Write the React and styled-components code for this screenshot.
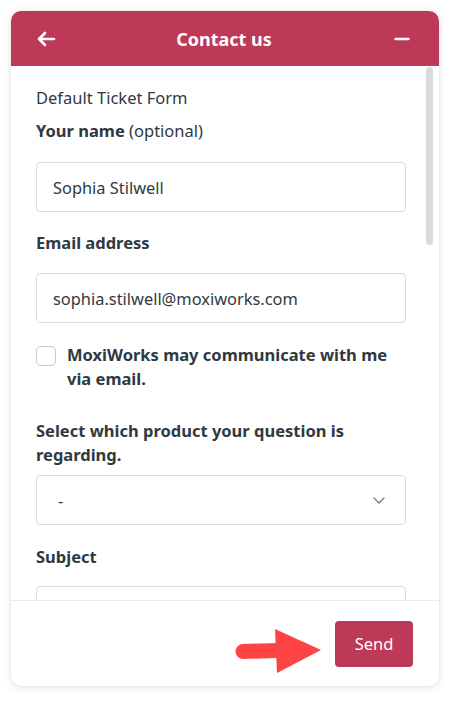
import React from "react";
import styled, { createGlobalStyle } from "styled-components";

const Global = createGlobalStyle`
  html, body { margin: 0; padding: 0; background: #ffffff; }
  body { font-family: "Noto Sans", "Open Sans", sans-serif; color: #2f3941; }
  * { box-sizing: border-box; }
`;

const Page = styled.div`
  padding: 11px 15px 15px 11px;
`;

const Card = styled.div`
  width: 428px;
  height: 675px;
  display: flex;
  flex-direction: column;
  border-radius: 10px;
  background: #ffffff;
  box-shadow: 0 1px 8px rgba(0, 0, 0, 0.13), 0 0 2px rgba(0, 0, 0, 0.06);
  overflow: hidden;
`;

const Header = styled.div`
  height: 55px;
  flex: none;
  background: #be3857;
  color: #ffffff;
  display: flex;
  align-items: center;
  justify-content: space-between;
  padding: 0 26px 0 24px;
`;

const IconButton = styled.button`
  width: 22px;
  height: 22px;
  padding: 0;
  border: none;
  background: transparent;
  color: #ffffff;
  display: flex;
  align-items: center;
  justify-content: center;
  cursor: pointer;
`;

const HeaderTitle = styled.h1`
  margin: 0;
  font-size: 18px;
  font-weight: 700;
  line-height: 24px;
`;

const Body = styled.div`
  position: relative;
  flex: 1;
  overflow: hidden;
  padding: 20px 33px 0 25px;
`;

const ScrollThumb = styled.div`
  position: absolute;
  top: 1px;
  right: 6px;
  width: 7px;
  height: 178px;
  border-radius: 4px;
  background: #d8dcde;
`;

const FormTitle = styled.div`
  font-size: 16.5px;
  line-height: 24px;
  color: #2f3941;
`;

const Label = styled.label`
  display: block;
  margin-top: ${(p) => p.$mt}px;
  font-size: 16.5px;
  line-height: 24px;
  font-weight: 700;
  color: #2f3941;
`;

const Optional = styled.span`
  font-weight: 400;
`;

const TextInput = styled.div`
  margin-top: ${(p) => p.$mt}px;
  height: 50px;
  border: 1px solid #d8dcde;
  border-radius: 4px;
  padding: 0 16px;
  display: flex;
  align-items: center;
  font-size: 16.4px;
  color: #2f3941;
`;

const SelectBox = styled(TextInput)`
  justify-content: space-between;
  padding: 0 20px 0 21px;
`;

const CheckRow = styled.div`
  margin-top: ${(p) => p.$mt}px;
  display: flex;
  align-items: flex-start;
  gap: 11px;
`;

const CheckBox = styled.span`
  flex: none;
  width: 20px;
  height: 20px;
  margin-top: 3px;
  border: 1px solid #c2c8cc;
  border-radius: 5px;
  background: #ffffff;
`;

const CheckLabel = styled.span`
  font-size: 16.5px;
  line-height: 24px;
  font-weight: 700;
  color: #2f3941;
`;

const Footer = styled.div`
  flex: none;
  height: 86px;
  border-top: 1px solid #e9ebed;
  display: flex;
  align-items: center;
  justify-content: flex-end;
  gap: 14px;
  padding: 0 26px 0 0;
`;

const Pointer = styled.svg`
  margin-top: 15px;
`;

const SendButton = styled.button`
  width: 78px;
  height: 46px;
  border: none;
  border-radius: 4px;
  background: #be3857;
  color: #ffffff;
  font-family: "Noto Sans", "Open Sans", sans-serif;
  font-size: 16.5px;
  padding: 0;
  cursor: pointer;
`;

export default function App() {
  return (
    <Page>
      <Global />
      <Card>
        <Header>
          <IconButton aria-label="Back">
            <svg width="20" height="16" viewBox="0 0 20 16" fill="none">
              <path d="M18 8H3M9 2L3 8l6 6" stroke="#fff" strokeWidth="2.6" strokeLinecap="round" strokeLinejoin="round" />
            </svg>
          </IconButton>
          <HeaderTitle>Contact us</HeaderTitle>
          <IconButton aria-label="Minimize">
            <svg width="16" height="4" viewBox="0 0 16 4" fill="none">
              <path d="M1.5 2h13" stroke="#fff" strokeWidth="2.4" strokeLinecap="round" />
            </svg>
          </IconButton>
        </Header>
        <Body>
          <ScrollThumb />
          <FormTitle>Default Ticket Form</FormTitle>
          <Label $mt={9}>
            Your name <Optional>(optional)</Optional>
          </Label>
          <TextInput $mt={19}>Sophia Stilwell</TextInput>
          <Label $mt={19}>Email address</Label>
          <TextInput $mt={18}>sophia.stilwell@moxiworks.com</TextInput>
          <CheckRow $mt={20}>
            <CheckBox />
            <CheckLabel>
              MoxiWorks may communicate with me
              <br />
              via email.
            </CheckLabel>
          </CheckRow>
          <Label $mt={28}>
            Select which product your question is
            <br />
            regarding.
          </Label>
          <SelectBox $mt={8}>
            <span>-</span>
            <svg width="12" height="7" viewBox="0 0 12 7" fill="none">
              <path d="M1 1l5 5 5-5" stroke="#68737d" strokeWidth="1.2" strokeLinecap="round" strokeLinejoin="round" />
            </svg>
          </SelectBox>
          <Label $mt={20}>Subject</Label>
          <TextInput $mt={17} />
        </Body>
        <Footer>
          <Pointer width="86" height="45" viewBox="0 0 86 45">
            <path d="M8 15 L42 14 L42 29 L8 30 A7.5 7.5 0 0 1 8 15 Z" fill="#fd4343" />
            <path d="M40 0 L86 21 L42 44 Z" fill="#fd4343" />
          </Pointer>
          <SendButton>Send</SendButton>
        </Footer>
      </Card>
    </Page>
  );
}
